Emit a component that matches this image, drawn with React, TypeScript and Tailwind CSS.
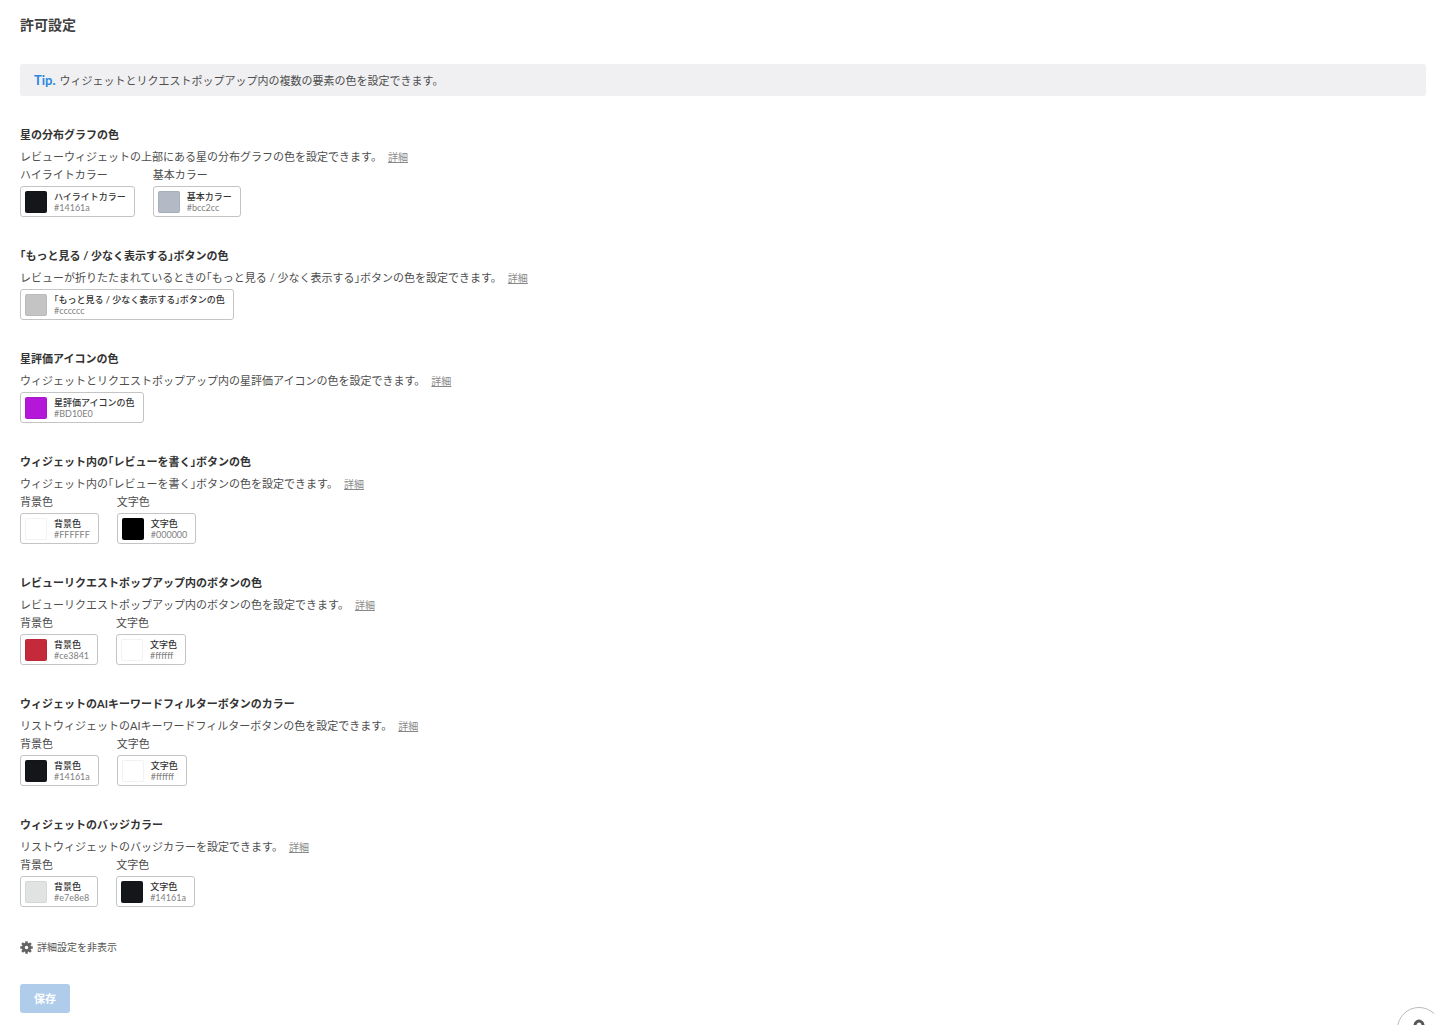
import { Fragment } from 'react';

interface ColorOption {
  label: string;
  hex: string;
  swatch: string;
}

interface ColorSection {
  title: string;
  description: string;
  showLabels: boolean;
  options: ColorOption[];
}

const SECTIONS: ColorSection[] = [
  {
    title: '星の分布グラフの色',
    description: 'レビューウィジェットの上部にある星の分布グラフの色を設定できます。',
    showLabels: true,
    options: [
      { label: 'ハイライトカラー', hex: '#14161a', swatch: 'bg-[#14161a]' },
      { label: '基本カラー', hex: '#bcc2cc', swatch: 'bg-[#b3b9c5]' },
    ],
  },
  {
    title: '「もっと見る / 少なく表示する」ボタンの色',
    description: 'レビューが折りたたまれているときの「もっと見る / 少なく表示する」ボタンの色を設定できます。',
    showLabels: false,
    options: [{ label: '「もっと見る / 少なく表示する」ボタンの色', hex: '#cccccc', swatch: 'bg-[#c4c4c4]' }],
  },
  {
    title: '星評価アイコンの色',
    description: 'ウィジェットとリクエストポップアップ内の星評価アイコンの色を設定できます。',
    showLabels: false,
    options: [{ label: '星評価アイコンの色', hex: '#BD10E0', swatch: 'bg-[#b517d8]' }],
  },
  {
    title: 'ウィジェット内の「レビューを書く」ボタンの色',
    description: 'ウィジェット内の「レビューを書く」ボタンの色を設定できます。',
    showLabels: true,
    options: [
      { label: '背景色', hex: '#FFFFFF', swatch: 'bg-white' },
      { label: '文字色', hex: '#000000', swatch: 'bg-black' },
    ],
  },
  {
    title: 'レビューリクエストポップアップ内のボタンの色',
    description: 'レビューリクエストポップアップ内のボタンの色を設定できます。',
    showLabels: true,
    options: [
      { label: '背景色', hex: '#ce3841', swatch: 'bg-[#c42a3a]' },
      { label: '文字色', hex: '#ffffff', swatch: 'bg-white' },
    ],
  },
  {
    title: 'ウィジェットのAIキーワードフィルターボタンのカラー',
    description: 'リストウィジェットのAIキーワードフィルターボタンの色を設定できます。',
    showLabels: true,
    options: [
      { label: '背景色', hex: '#14161a', swatch: 'bg-[#14161a]' },
      { label: '文字色', hex: '#ffffff', swatch: 'bg-white' },
    ],
  },
  {
    title: 'ウィジェットのバッジカラー',
    description: 'リストウィジェットのバッジカラーを設定できます。',
    showLabels: true,
    options: [
      { label: '背景色', hex: '#e7e8e8', swatch: 'bg-[#e1e3e3]' },
      { label: '文字色', hex: '#14161a', swatch: 'bg-[#14161a]' },
    ],
  },
];

// Corner brackets are set half-width, the rest of the text keeps its full width
function JaText({ text }: { text: string }) {
  return (
    <>
      {text.split(/([「」])/).map((part, index) =>
        part === '「' || part === '」' ? (
          <span key={index} className="[font-feature-settings:'halt']">
            {part}
          </span>
        ) : (
          <Fragment key={index}>{part}</Fragment>
        )
      )}
    </>
  );
}

function GearIcon() {
  return (
    <svg className="h-[13px] w-[13px]" viewBox="0 0 26 26" fill="none" stroke="#636363">
      <circle cx="13" cy="13" r="6.500" strokeWidth="6" />
      {[0, 45, 90, 135].map((angle) => (
        <g key={angle} transform={`rotate(${angle} 13 13)`}>
          <path d="M13 0.500v4.500M13 21v4.500" strokeWidth="5" />
        </g>
      ))}
    </svg>
  );
}

function ColorChip({ option }: { option: ColorOption }) {
  return (
    <button
      type="button"
      className="flex items-center gap-[7px] rounded-[3px] border border-[#c4c4c4] bg-white pt-1 pr-2 pb-[3px] pl-1 text-left"
    >
      <span className={`h-[22px] w-[22px] rounded-[2px] border border-black/5 ${option.swatch}`} />
      <span className="flex flex-col text-[9px] leading-[11px] whitespace-nowrap">
        <span className="font-medium text-[#333]">
          <JaText text={option.label} />
        </span>
        <span className="text-[#808080]">{option.hex}</span>
      </span>
    </button>
  );
}

function Section({ section }: { section: ColorSection }) {
  return (
    <section>
      <h2 className="mb-1 leading-[18px] font-bold text-[#333]">
        <JaText text={section.title} />
      </h2>
      <p className="leading-[18px]">
        <JaText text={section.description} />
        <a href="#" className="ml-1.5 text-[10px] text-[#888] underline">
          詳細
        </a>
      </p>
      <div className="flex gap-[18px]">
        {section.options.map((option) => (
          <div key={option.label}>
            {section.showLabels && <div className="leading-[18px]">{option.label}</div>}
            <div className="mt-0.5 flex">
              <ColorChip option={option} />
            </div>
          </div>
        ))}
      </div>
    </section>
  );
}

export default function App() {
  return (
    <main className="bg-white pt-4 pr-2 pb-3 pl-5 font-[Lato,'Noto_Sans_CJK_JP',sans-serif] text-[11px] text-[#4d4d4d]">
      <h1 className="text-[14px] leading-[18px] font-bold text-[#404040]">許可設定</h1>

      <div className="mt-[30px] mb-[30px] flex h-8 items-baseline gap-1 rounded-[3px] bg-[#f0f0f2] px-[14px] pt-[7px] leading-[18px]">
        <strong className="text-[13px] font-bold text-[#2c86e0]">Tip.</strong>
        <span>ウィジェットとリクエストポップアップ内の複数の要素の色を設定できます。</span>
      </div>

      <div className="flex flex-col gap-[30px]">
        {SECTIONS.map((section) => (
          <Section key={section.title} section={section} />
        ))}
      </div>

      <button type="button" className="mt-[31px] flex items-center gap-1 text-[10px] leading-[18px] text-[#555]">
        <GearIcon />
        詳細設定を非表示
      </button>

      <button
        type="button"
        className="mt-7 rounded-[3px] bg-[#afcdeb] px-[14px] py-[5px] text-[11px] leading-[19px] font-bold text-white"
      >
        保存
      </button>

      {/* Help launcher, partly outside the window */}
      <button
        type="button"
        aria-label="ヘルプ"
        className="fixed -right-[7px] -bottom-[26px] flex h-11 w-11 justify-center rounded-full border border-[#bbb] bg-white pt-[11px]"
      >
        <svg viewBox="0 0 12 20" className="h-5 w-3" fill="none" stroke="#555" strokeWidth="3">
          <path d="M2 6a4 4 0 1 1 6.5 3.2C7 10.500 6 11 6 13" />
        </svg>
      </button>
    </main>
  );
}
